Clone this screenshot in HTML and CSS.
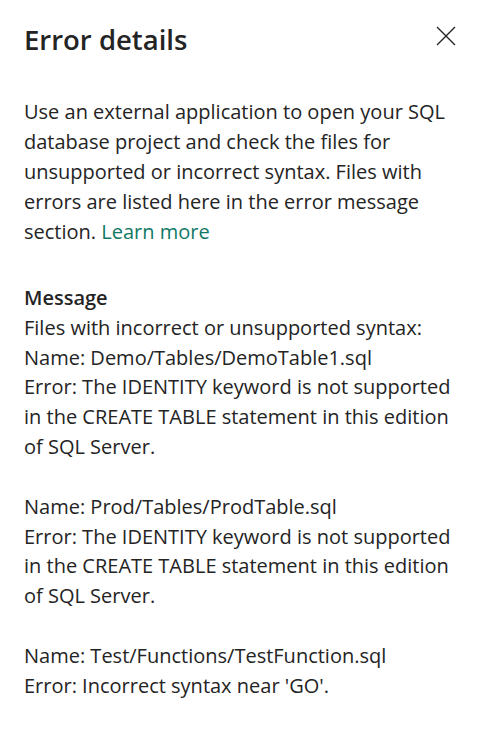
FILE: index.html
```html
<!DOCTYPE html>
<html lang="en">
<head>
<meta charset="utf-8">
<title>Error details</title>
<link rel="stylesheet" href="styles.css">
</head>
<body>
<div class="panel">
  <div class="header">
    <h1 class="title">Error details</h1>
    <button class="close" aria-label="Close">
      <svg width="20" height="20" viewBox="0 0 20 20"><path d="M1 1 L19 19 M19 1 L1 19" stroke="#242424" stroke-width="1.4" fill="none"/></svg>
    </button>
  </div>
  <p class="intro">Use an external application to open your SQL database project and check the files for unsupported or incorrect syntax. Files with errors are listed here in the error message section. <a class="link" href="#">Learn more</a></p>
  <div class="message">
    <div class="label">Message</div>
    <div class="line">Files with incorrect or unsupported syntax:</div>
    <div class="line">Name: Demo/Tables/DemoTable1.sql</div>
    <div class="line">Error: The IDENTITY keyword is not supported in the CREATE TABLE statement in this edition of SQL Server.</div>
    <div class="blank"></div>
    <div class="line">Name: Prod/Tables/ProdTable.sql</div>
    <div class="line">Error: The IDENTITY keyword is not supported in the CREATE TABLE statement in this edition of SQL Server.</div>
    <div class="blank"></div>
    <div class="line">Name: Test/Functions/TestFunction.sql</div>
    <div class="line">Error: Incorrect syntax near 'GO'.</div>
  </div>
</div>
</body>
</html>
```
FILE: styles.css
```css
html, body { margin: 0; padding: 0; background: #fff; }
body { font-family: "Open Sans", "Noto Sans", sans-serif; color: #242424; }
.panel { padding: 20px 22px 24px 24px; }
.header { display: flex; justify-content: space-between; align-items: flex-start; }
.title { margin: 0; font-size: 27.5px; font-weight: 600; line-height: 40px; }
.close { background: none; border: none; padding: 0; margin: 6px 1px 0 0; width: 20px; height: 20px; display: flex; }
.intro { margin: 37px 0 0 0; font-size: 20px; line-height: 30px; }
.link { color: #117865; text-decoration: none; }
.message { margin-top: 36px; font-size: 20px; line-height: 29.8px; }
.label { font-weight: 600; }
.blank { height: 30px; }
```
